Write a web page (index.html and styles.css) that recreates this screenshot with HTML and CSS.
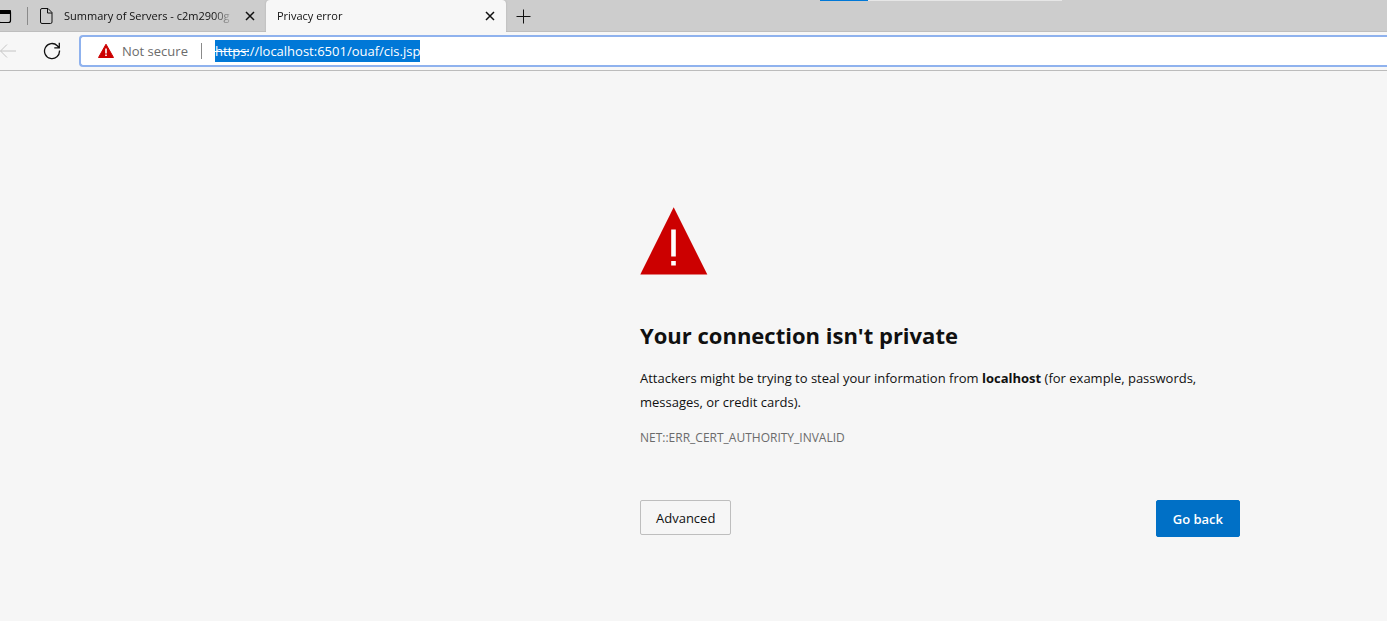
FILE: index.html
```html
<!DOCTYPE html>
<html lang="en">
<head>
    <meta charset="UTF-8">
    <meta name="viewport" content="width=device-width, initial-scale=1.0">
    <title>Privacy error</title>
    <link rel="stylesheet" href="styles.css">
</head>
<body>
    <header class="browser">
        <div class="loader"><div class="loader-bar"></div></div>
        <div class="tab-strip">
            <button class="icon-btn tab-menu" aria-label="Tab actions">
                <svg width="16" height="16" viewBox="0 0 16 16"><rect x="2.5" y="2.5" width="12" height="12" rx="2" fill="none" stroke="#000" stroke-width="1.2"/><path d="M3 2h11a1 1 0 0 1 1 1v3H2V3a1 1 0 0 1 1-1z"/></svg>
            </button>
            <div class="tab">
                <svg width="14" height="16" viewBox="0 0 14 16" fill="none" stroke="#111"><path d="M3 .5h6l4 4v9.500a1.500 1.500 0 0 1-1.500 1.500h-8.500A1.500 1.500 0 0 1 1.500 14V2A1.500 1.500 0 0 1 3 .5zM8.500.5v4.500h4.500"/></svg>
                <span class="tab-title">Summary of Servers - c2m2900g</span>
                <button class="icon-btn" aria-label="Close tab">
                    <svg width="10" height="10" viewBox="0 0 10 10" stroke="#111" stroke-width="1.5"><path d="M1 1l8 8M9 1l-8 8"/></svg>
                </button>
            </div>
            <div class="tab active">
                <span class="tab-title">Privacy error</span>
                <button class="icon-btn" aria-label="Close tab">
                    <svg width="10" height="10" viewBox="0 0 10 10" stroke="#111" stroke-width="1.5"><path d="M1 1l8 8M9 1l-8 8"/></svg>
                </button>
            </div>
            <button class="icon-btn new-tab" aria-label="New tab">
                <svg width="15" height="15" viewBox="0 0 15 15" stroke="#111"><path d="M7.5.5v14M.5 7.500h14"/></svg>
            </button>
        </div>
        <div class="toolbar">
            <button class="icon-btn back" aria-label="Back" disabled>
                <svg width="16" height="16" viewBox="0 0 16 16" fill="none" stroke="#c4c4c4"><path d="M7 1.500L.5 8 7 14.500M.5 8H16"/></svg>
            </button>
            <button class="icon-btn reload" aria-label="Reload">
                <svg width="18" height="18" viewBox="0 0 18 18" fill="none" stroke="#111" stroke-width="1.3"><path d="M16.500 8.500A7.500 7.500 0 1 1 14.300 3.700L16 5.500M16.300.8v5h-5"/></svg>
            </button>
            <div class="address">
                <svg width="18" height="16" viewBox="0 0 18 16"><path d="M9 1.200L16.500 14.500H1.500z" fill="#c00" stroke="#c00" stroke-linejoin="round"/><path d="M8.200 5.500h1.600v5H8.200zM8.200 11.500h1.600v1.600H8.200z" fill="#fff"/></svg>
                <label class="security" for="url">Not secure</label>
                <div class="url-box">
                    <input type="text" id="url" value="https://localhost:6501/ouaf/cis.jsp" spellcheck="false">
                </div>
            </div>
        </div>
    </header>
    <main class="warning">
        <svg class="warning-icon" width="68" height="68" viewBox="0 0 68 68"><path d="M33.700.3L67.300 67.500H.3z" fill="#c00"/><path d="M31.200 22.500h4.600v27h-4.600zM31.200 54h4.600v4.600h-4.600z" fill="#fff"/></svg>
        <h1>Your connection isn't private</h1>
        <p>Attackers might be trying to steal your information from <strong>localhost</strong> (for example, passwords, messages, or credit cards).</p>
        <div class="error-code">NET::ERR_CERT_AUTHORITY_INVALID</div>
        <div class="buttons">
            <button class="btn">Advanced</button>
            <button class="btn primary">Go back</button>
        </div>
    </main>
    <script src="script.js"></script>
</body>
</html>
```
FILE: styles.css
```css
body {
    margin: 0;
    background-color: #f6f6f6;
    color: #101010;
    font-family: "Open Sans", "Noto Sans", sans-serif;
    font-size: 13px;
    overflow-x: hidden;
}

button, input {
    font-family: inherit;
}

svg {
    display: block;
    flex-shrink: 0;
}

.browser {
    position: relative;
    border-bottom: 1px solid #bcbcbc;
}

.loader {
    position: absolute;
    top: 0;
    left: 820px;
    width: 242px;
    height: 1px;
    background-color: #e6e6e6;
}

.loader-bar {
    width: 20%;
    height: 1px;
    background-color: #0078d7;
}

.tab-strip {
    display: flex;
    align-items: center;
    height: 32px;
    background-color: #cdcdcd;
    box-shadow: inset 0 -1px #bebebe;
}

.icon-btn {
    display: flex;
    align-items: center;
    justify-content: center;
    padding: 0;
    border: none;
    background: none;
}

.tab-menu {
    width: 32px;
    height: 18px;
    justify-content: flex-start;
    margin-left: -4px;
    border-right: 1px solid #8a8a8a;
}

.tab {
    display: flex;
    align-items: center;
    gap: 11px;
    box-sizing: border-box;
    width: 238px;
    height: 32px;
    padding: 0 11px;
}

.tab-title {
    flex: 1;
    overflow: hidden;
    white-space: nowrap;
    font-size: 11px;
    line-height: 16px;
    -webkit-mask-image: linear-gradient(to right, #000 88%, transparent);
    mask-image: linear-gradient(to right, #000 88%, transparent);
}

.tab.active {
    width: 240px;
    border-radius: 4px 4px 0 0;
    background-color: #f7f7f7;
    box-shadow: 0 0 2px #aaa;
}

.new-tab {
    width: 34px;
    height: 31px;
}

.toolbar {
    position: relative;
    display: flex;
    align-items: center;
    height: 38px;
    background-color: #f7f7f7;
}

.reload {
    margin: 0 18px 0 27px;
}

.address {
    display: flex;
    flex: 1;
    align-items: center;
    box-sizing: border-box;
    height: 32px;
    padding-left: 16px;
    border: 2px solid #8fb2ee;
    border-right: none;
    border-radius: 4px 0 0 4px;
    background-color: #fff;
}

.security {
    margin: 0 13px 0 7px;
    padding-right: 13px;
    border-right: 1px solid #8a8a8a;
    color: #6b6b6b;
    line-height: 16px;
}

.url-box {
    position: relative;
    flex: 1;
}

/* strikes out the scheme of an untrusted address */
.url-box::after {
    content: "";
    position: absolute;
    top: 11px;
    left: 0;
    width: 34px;
    height: 1px;
    background-color: #fff;
}

#url {
    display: block;
    width: 100%;
    height: 22px;
    padding: 0;
    border: none;
    outline: none;
    background: none;
    font-size: 13px;
    line-height: 22px;
}

#url::selection {
    background-color: #0078d7;
    color: #fff;
}

.warning {
    max-width: 600px;
    margin-left: 640px;
    padding-top: 136px;
}

.warning h1 {
    margin: 44px 0 15px;
    font-size: 22px;
    font-weight: 700;
    line-height: 32px;
}

.warning p {
    margin: 0;
    font-size: 13px;
    line-height: 24px;
}

.error-code {
    margin-top: 12px;
    color: #6b6b6b;
    font-size: 12px;
    line-height: 24px;
}

.buttons {
    display: flex;
    align-items: flex-start;
    justify-content: space-between;
    margin-top: 50px;
}

.btn {
    padding: 9px 15px 7px;
    border: 1px solid #bebebe;
    border-radius: 2px;
    background: none;
    color: #101010;
    font-size: 13px;
    line-height: 17px;
}

.btn.primary {
    padding: 10px 16px 8px;
    border-color: #0070c6;
    background-color: #0070c6;
    color: #fff;
    font-weight: 600;
}
```
FILE: script.js
```js
const url = document.getElementById('url');
url.focus();
url.select();
```
